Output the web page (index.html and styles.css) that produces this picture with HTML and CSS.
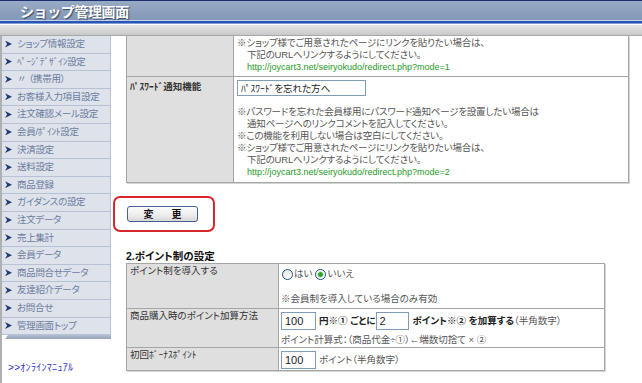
FILE: index.html
```html
<!DOCTYPE html>
<html lang="ja">
<head>
<meta charset="UTF-8">
<meta name="viewport" content="width=device-width, initial-scale=1.0">
<title>ショップ管理画面</title>
<link rel="stylesheet" href="styles.css">
</head>
<body>
<div id="header">
    <div class="title-band"><h1>ショップ管理画面</h1></div>
    <div class="title-rule"></div>
    <div class="sub-bar"></div>
</div>

<div class="layout">
    <div id="sideMenu">
        <ul class="menu">
            <li><a href="#">ショップ情報設定</a></li>
            <li><a href="#">ﾍﾟｰｼﾞﾃﾞｻﾞｲﾝ設定</a></li>
            <li><a href="#">〃 （携帯用）</a></li>
            <li><a href="#">お客様入力項目設定</a></li>
            <li><a href="#">注文確認メール設定</a></li>
            <li><a href="#">会員/ﾎﾟｲﾝﾄ設定</a></li>
            <li><a href="#">決済設定</a></li>
            <li><a href="#">送料設定</a></li>
            <li><a href="#">商品登録</a></li>
            <li><a href="#">ガイダンスの設定</a></li>
            <li><a href="#">注文データ</a></li>
            <li><a href="#">売上集計</a></li>
            <li><a href="#">会員データ</a></li>
            <li><a href="#">商品問合せデータ</a></li>
            <li><a href="#">友達紹介データ</a></li>
            <li><a href="#">お問合せ</a></li>
            <li><a href="#">管理画面トップ</a></li>
        </ul>
        <div class="menu-foot"></div>
        <a class="manual-link" href="#">&gt;&gt;ｵﾝﾗｲﾝﾏﾆｭｱﾙ</a>
    </div>

    <div id="content">
        <table class="setting-table top-table">
            <colgroup><col class="col-label"><col></colgroup>
            <tr class="first-row">
                <td class="label"></td>
                <td class="value">
                    <div>※ショップ様でご用意されたページにリンクを貼りたい場合は、</div>
                    <div class="indent">下記のURLへリンクするようにしてください。</div>
                    <div class="indent url">http://joycart3.net/seiryokudo/redirect.php?mode=1</div>
                </td>
            </tr>
            <tr>
                <td class="label strong pw-label">ﾊﾟｽﾜｰﾄﾞ通知機能</td>
                <td class="value pw-value">
                    <input type="text" class="text-input pw-input" value="ﾊﾟｽﾜｰﾄﾞを忘れた方へ">
                    <div class="notes">
                        <div>※パスワードを忘れた会員様用にパスワード通知ページを設置したい場合は</div>
                        <div class="indent">通知ページへのリンクコメントを記入してください。</div>
                        <div>※この機能を利用しない場合は空白にしてください。</div>
                        <div>※ショップ様でご用意されたページにリンクを貼りたい場合は、</div>
                        <div class="indent">下記のURLへリンクするようにしてください。</div>
                        <div class="indent url">http://joycart3.net/seiryokudo/redirect.php?mode=2</div>
                    </div>
                </td>
            </tr>
        </table>

        <div class="submit-mark">
            <button type="button" class="submit-btn">変　更</button>
        </div>

        <h2>2.ポイント制の設定</h2>

        <table class="setting-table point-table">
            <colgroup><col class="col-label-wide"><col></colgroup>
            <tr>
                <td class="label">ポイント制を導入する</td>
                <td class="value radio-cell">
                    <div class="radio-line">
                        <span class="radio"></span><span>はい</span>
                        <span class="radio checked"></span><span>いいえ</span>
                    </div>
                    <div class="note">※会員制を導入している場合のみ有効</div>
                </td>
            </tr>
            <tr>
                <td class="label">商品購入時のポイント加算方法</td>
                <td class="value input-cell">
                    <div class="input-line">
                        <input type="text" class="text-input num-input" value="100">
                        <span class="dark">円※① ごとに</span>
                        <input type="text" class="text-input small-input" value="2">
                        <span class="dark">ポイント※② を加算する</span><span>（半角数字）</span>
                    </div>
                    <div class="formula">ポイント計算式：（商品代金÷①）←端数切捨て × ②</div>
                </td>
            </tr>
            <tr>
                <td class="label">初回ﾎﾞｰﾅｽﾎﾟｲﾝﾄ</td>
                <td class="value input-cell">
                    <div class="input-line">
                        <input type="text" class="text-input num-input" value="100">
                        <span>ポイント（半角数字）</span>
                    </div>
                </td>
            </tr>
        </table>
    </div>
</div>
</body>
</html>
```

FILE: styles.css
```css
body {
    margin: 0;
    background-color: #fff;
    font-family: "Liberation Sans", "Noto Sans CJK JP", sans-serif;
    font-size: 9.5px;
    color: #555;
    font-feature-settings: "palt";
}

/* header */
.title-band {
    height: 19px;
    border-top: 1px solid #1c2f70;
    background: linear-gradient(#98abc5, #8298b7);
}

.title-band h1 {
    margin: 0;
    padding: 1px 0 0 20px;
    font-family: "Noto Sans CJK JP", sans-serif;
    font-size: 14px;
    line-height: 18px;
    font-weight: bold;
    letter-spacing: -0.4px;
    color: #fff;
    font-feature-settings: normal;
    text-shadow: 1px 1px 1px #3a4866;
}

.title-rule {
    height: 5px;
    background: linear-gradient(#c9d4e6 0 1px, #2a55b5 1px 3px, #7f9fd6 3px 4px, #fff 4px 5px);
}

.sub-bar {
    height: 10px;
    background: linear-gradient(#e6e6e6, #c8c8c8);
    border-bottom: 1px solid #a8a8a8;
}

.layout {
    display: flex;
    min-height: calc(100vh - 36px);
}

/* side menu */
#sideMenu {
    width: 109px;
    border-left: 2px solid #b0b0b0;
    flex-shrink: 0;
}

.menu {
    list-style: none;
    margin: 0;
    padding: 0;
}

.menu li {
    height: 16.6px;
    background-color: #dde2eb;
    border-bottom: 1px solid #b6c2d4;
    border-right: 1px solid #b4c4da;
}

.menu a {
    display: block;
    line-height: 16.6px;
    color: #6d7da0;
    text-decoration: none;
    white-space: nowrap;
    letter-spacing: -0.3px;
}

.menu a::before {
    content: "";
    display: inline-block;
    width: 7px;
    height: 7px;
    margin: 0 5px 0 3px;
    background-color: #283a6c;
    clip-path: polygon(0 0, 100% 50%, 0 100%, 30% 50%);
    vertical-align: -0.5px;
}

.menu-foot {
    height: 4px;
    margin-left: 3px;
    background: linear-gradient(#b4bfd0, #96a4ba);
    clip-path: polygon(3px 0, 100% 0, 100% 100%, 0 100%);
}

.manual-link {
    display: block;
    margin-top: 23px;
    padding-left: 6px;
    font-size: 10px;
    line-height: 12px;
    color: #3232cc;
    text-decoration: none;
    letter-spacing: 0.3px;
}

/* content */
#content {
    flex: 1;
    padding-left: 1px;
}

.setting-table {
    border-collapse: collapse;
    margin-left: 14px;
    border: 1px solid #9c9c9c;
    box-shadow: 1px 1px 0 #d4d4d4;
}

.setting-table td {
    border: 1px solid #a6a6a6;
    vertical-align: top;
    padding: 1px 3px 0 3px;
    line-height: 12px;
}

.setting-table td.label {
    background-color: #dfdfdf;
    color: #333;
}

.setting-table td.strong {
    font-weight: bold;
}

.top-table {
    width: 503px;
    border-top: none;
}

.top-table .col-label {
    width: 107px;
}

.top-table td.value {
    letter-spacing: -0.2px;
}

.top-table .first-row td {
    border-top: none;
    padding-bottom: 3px;
}

.pw-label {
    padding-top: 4px !important;
}

.pw-value {
    padding-top: 3px !important;
    padding-bottom: 4px !important;
}

.indent {
    padding-left: 10px;
}

.url {
    font-size: 9px;
    letter-spacing: 0;
    color: #1f9a1f;
}

.text-input {
    display: block;
    box-sizing: border-box;
    border: 1px solid #7f9db9;
    padding: 0 3px;
    margin: 0;
    background-color: #fff;
    color: #222;
    outline: none;
}

.pw-input {
    width: 129px;
    height: 16px;
    font-family: "Noto Sans CJK JP", sans-serif;
    font-size: 9.5px;
    font-feature-settings: "palt";
}

.notes {
    margin-top: 10px;
}

/* change button */
.submit-mark {
    width: fit-content;
    margin: 13px 0 0 1px;
    padding: 8px 15px 8px 12px;
    border: 2px solid #d9262a;
    border-radius: 7px;
}

.submit-btn {
    display: block;
    width: 71px;
    height: 16px;
    padding: 0 0 0 4px;
    border: 1px solid #43628f;
    border-radius: 3px;
    background: linear-gradient(#fdfdfd, #ececec 60%, #d8d8d8);
    font-family: "Noto Sans CJK JP", sans-serif;
    font-size: 10px;
    font-weight: bold;
    line-height: 14px;
    letter-spacing: 4px;
    color: #111;
}

h2 {
    margin: 17px 0 0 14px;
    font-size: 10.5px;
    line-height: 14px;
    font-weight: bold;
    color: #111;
}

/* point table */
.point-table {
    width: 479px;
}

.point-table .col-label-wide {
    width: 152px;
}

.point-table td.value {
    padding-left: 2px;
}

.radio-cell {
    padding-bottom: 3px !important;
}

.radio-line {
    display: flex;
    align-items: center;
    height: 18px;
    color: #555;
}

.radio {
    display: inline-block;
    box-sizing: border-box;
    width: 11px;
    height: 11px;
    margin: 0 1px 0 1px;
    border: 1px solid #1c5180;
    border-radius: 50%;
    background: linear-gradient(135deg, #e4e4de, #fff);
}

.radio.checked {
    margin-left: 3px;
    background: radial-gradient(circle, #2ca42c 0 2px, #9ad49a 2.5px, #fff 3.5px);
}

.note {
    margin-top: 10px;
}

.input-cell {
    padding-top: 3px !important;
    padding-bottom: 1px !important;
}

.input-line {
    display: flex;
    align-items: center;
    height: 18px;
}

.num-input,
.small-input {
    height: 18px;
    font-family: "Liberation Sans", sans-serif;
    font-size: 11px;
}

.num-input {
    width: 35px;
    margin-right: 3px;
}

.small-input {
    width: 33px;
    margin-right: 4px;
}

.dark {
    color: #222;
    font-weight: bold;
}

.formula {
    margin-top: 4px;
}
```
